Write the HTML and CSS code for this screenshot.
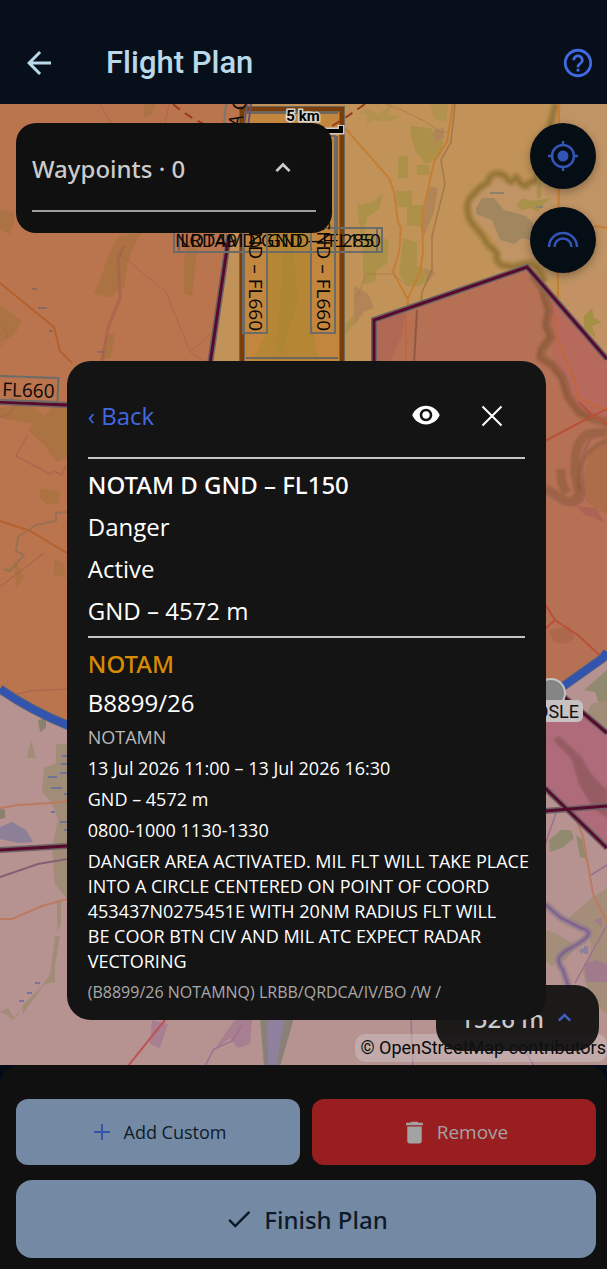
FILE: index.html
```html
<!DOCTYPE html>
<html lang="en">

<head>
    <meta charset="UTF-8" />
    <meta name="viewport" content="width=device-width, initial-scale=1.0" />
    <title>Flight Plan</title>
    <link rel="stylesheet" href="styles.css">
</head>

<body>
    <header class="topbar">
        <button class="icon-btn back-btn" aria-label="Go back">
            <svg width="36" height="36" viewBox="0 0 24 24" fill="currentColor">
                <path d="M20 11H7.830l5.590-5.590L12 4l-8 8 8 8 1.410-1.410L7.830 13H20v-2z" />
            </svg>
        </button>
        <h1>Flight Plan</h1>
        <button class="icon-btn help-btn" aria-label="Help">
            <svg width="34" height="34" viewBox="0 0 24 24" fill="currentColor">
                <path d="M11 18h2v-2h-2v2zm1-16C6.480 2 2 6.480 2 12s4.480 10 10 10 10-4.480 10-10S17.520 2 12 2zm0 18c-4.410 0-8-3.590-8-8s3.590-8 8-8 8 3.590 8 8-3.590 8-8 8zm0-14c-2.210 0-4 1.790-4 4h2c0-1.100.9-2 2-2s2 .9 2 2c0 2-3 1.750-3 5h2c0-2.250 3-2.500 3-5 0-2.210-1.790-4-4-4z" />
            </svg>
        </button>
    </header>

    <main class="map">
        <svg class="map-canvas" viewBox="0 104 607 962" preserveAspectRatio="xMidYMin slice" role="img" aria-label="Airspace map">
            <rect y="104" width="607" height="962" fill="#c19358" />
            <path d="M607 104H575L560 160 575 240 560 300 607 370Z" fill="#c29264" />

            <!-- woodland, right -->
            <g fill="#a59044">
                <path d="M366 108l12 6 14-10-3 10 12 2-12 6-14-2-8 4 0-10-8 0zM430 104h18l-2 18-12-4z" opacity=".5" />
                <path d="M410 126l20 2 14 14-6 16-12 6-10-12-4-12zM398 156h10v22h-10zM417 165h12v10h-12zM396 191h16v14h13l-2 22-16-2v-18h-10zM403 238l14 4v24l12 4v10l-10 6h-12l-8-12zM357 205l16-3 10-9-4 16-12 8-3 17 25 6-2 24-10 6-2 12-12 2v-30zM345 325l12-14v10l-6 6-6 8z" opacity=".75" />
                <path d="M584 316l8-8 2 10 8 4-10 4 4 12-12-10z" />
            </g>
            <g fill="#b28558">
                <path d="M430 186l8 2-4 24-10 24-4-10zM354 286l14 8 6 14-10 4-10 14zM434 130l10-2 0 10-10 6zM424 268l12 4-8 10z" />
            </g>

            <!-- lake -->
            <path d="M555 104c-8 24-10 42-15 64-4 14-12 10-17 12-10 8-10-4-18-4-12-6-14 8-20 12-12 4-18 10-16 22 2 14 14 14 20 24 12 8 4 20 16 26 16 8 26-4 34 10 6 12 30 20 68 0V104Z" fill="#c09464" />
            <g class="river" fill="none" stroke-linejoin="round">
                <path d="M556 104c-8 24-10 42-15 70-6 12-10 4-15 12-8-2-6-6-10-9-4 6-6 6-10 0-8-6-16-4-18 5-6 4-10 6-14 12-8 6-8 16-4 26 6 10 12 12 16 22 4 6 8 6 11 12-2 8 4 12 10 12 10 4 16-6 24-2 8 4 10 10 14 18" stroke="#9b7a39" stroke-width="9" opacity=".6" />
                <path d="M556 104c-8 24-10 42-15 70-6 12-10 4-15 12-8-2-6-6-10-9-4 6-6 6-10 0-8-6-16-4-18 5-6 4-10 6-14 12-8 6-8 16-4 26 6 10 12 12 16 22 4 6 8 6 11 12-2 8 4 12 10 12 10 4 16-6 24-2 8 4 10 10 14 18" stroke="#84652f" stroke-width="3" opacity=".6" />
            </g>
            <path d="M476 208l6-10 12 0 10 12 22 6 12 12v14l-16-4-8 6-14-4-8-20-16-6z" fill="#a18760" />
            <path d="M516 206l6-8 10 3 20-3-8 6-6 8-8-4-8 2zM536 160l5-4v42h-4z" fill="#a9914b" />
            <path d="M490 193h14M536 207h7" stroke="#8e8069" stroke-width="2" />

            <!-- roads, right -->
            <g fill="none">
                <path d="M345 128l44 50 5 14 4 30 3 6-2 24-6 20 14 26M453 104l-6 38-13 20-12 54 1 36-3 20-12 26-4 64M559 104v70l-1 100v45M594 226l13 2" stroke="#c47f35" stroke-width="2" />
                <path d="M455 104l-4 38-10 18 4 24-13 52v34l-10 22-6 76" stroke="#9c7045" stroke-width="1.500" opacity=".8" />
                <path d="M386 104l16 6 24 12 14 10 8 0M366 274h26l14 10M366 274l-10 26" stroke="#a6774a" opacity=".7" />
            </g>

            <!-- airspace, left -->
            <path d="M0 104H250L228 240 210 361 200 800H0Z" fill="#ba754e" />
            <g fill="#a6713e" opacity=".7">
                <path d="M0 210l14 2v12l-4 10-10-4zM112 246l8-10 22-4-10 18-5 16-3 22-8 4-4 6-18-4 8-20zM144 104l12 0-4 10-8 4zM186 240l12 4-6 52-8-2 0-30zM0 305l22 16-8 14-14 8zM106 336l10-4-6 26-10 2z" />
                <path d="M0 408l30-4 14 12-10 8-34-6zM28 430l24-22 15-8v58l-10 4-14-18zM40 488l20 4-2 12-12 0-6-6zM14 560l10 16-8 12zM54 558l10 6 2 14-12-4z" />
            </g>
            <g fill="none" stroke="#a9644d" opacity=".8">
                <path d="M124 246l-6 12 2 40-12 30-6 34" stroke-width="3" />
                <path d="M169 104l-6 30M120 254l46 38 24 60 20 12M0 326c8 4 10 16 0 20M100 104l12 20M190 352l28-24" />
                <path d="M28 434l-12 22 34 18 4-3 8 4 4-10M0 587l44-34M0 698l30-7 37-2M0 417c14-2 18-14 10-20" stroke-width="1.500" />
                <path d="M67 512l-11 1v8l-20 4-18 12-2 14 8 4-14 16-6-2" stroke="#927053" stroke-width="2" />
            </g>
            <path d="M0 283l54 44 6 24 12 12M0 521l30 10 37 22" fill="none" stroke="#b4602f" stroke-width="2" />
            <path d="M32 289h5M38 308h9M49 331h4M98 352h6" stroke="#80655e" stroke-width="1.500" />

            <!-- corridor -->
            <rect x="243" y="108" width="98" height="256" fill="#c2863e" />
            <path d="M268 230h42v80l8 50h-66l15-26z" fill="#b58735" />
            <path d="M284 250l8-12 6 60-16 58-6-8 4-50z" fill="#a5822f" opacity=".4" />
            <g fill="none">
                <path d="M242 361V109H342V361" stroke="#6f665d" stroke-width="6" />
                <path d="M242 361V109H342V361" stroke="#7a3e08" stroke-width="4" />
                <path d="M246 113H338M246 358H338M337 136V235" stroke="#6f665d" stroke-width="2" />
                <path d="M251 104l-4 30M247 104l-4 30" stroke="#6b5269" stroke-width="2" />
                <path d="M226 104l-4 40" stroke="#7c7871" stroke-width="2" />
                <path d="M173 104q20 18 60 32M365 104q-22 16-40 26" stroke="#9c3c1b" stroke-width="2" stroke-dasharray="9 6" />
                <path d="M229 235L210 364" stroke="#6d6265" stroke-width="6" />
                <path d="M229 235L210 364" stroke="#580a2c" stroke-width="3" />
            </g>

            <!-- airspace, right -->
            <path d="M374 320L527 267 607 359V653Q560 700 500 740H374Z" fill="#b67155" />
            <path d="M376 322l30-10-4 24-6 12-6 16h-14z" fill="#a95f56" opacity=".5" />
            <path d="M552 298l55 62v60l-26-4-16-22-12-30z" fill="#b76a5c" />
            <path d="M607 440l-16 10-12 40 10 14 18 10z" fill="#a76a45" opacity=".6" />
            <g class="river" fill="none" stroke="#8b5a38" stroke-linejoin="round">
                <path d="M533 275l10 14 6 22-3 14 5 12-9 12-2 8 12 8 10 12 6 20 12 16 14 6 16 4M607 432l-20 2c-12 8-12 24-12 40l4 18c-2 12-12 10-16 8l-18-12M561 469c0 10 0 16 6 24" stroke-width="9" opacity=".6" />
                <path d="M541 291l7 20-3 14 5 12-9 12-2 8 12 8 10 12 6 20 12 16 14 6" stroke="#84512f" stroke-width="2" opacity=".6" />
                <path d="M607 440c-24 10-30 26-28 50" stroke-width="4" opacity=".6" />
            </g>
            <path d="M545 489l16 12c16 8 26 2 22-16-4-24 0-40 16-56" fill="none" stroke="#a16054" stroke-width="3" opacity=".8" />
            <path d="M576 506l20 2 8 14-20-8z" fill="#ad6454" />
            <path d="M549 630l20-4 6 12-10 6-12-2z" fill="#ab6748" opacity=".8" />
            <path d="M406 314v50M555 314l3 28 16 36 4 20 22 10 7 1" fill="none" stroke="#c0673c" stroke-width="2" />
            <path d="M545 441l34-18 28-14M579 402l12 12 16 10M545 629l10-9 24 16 28 26M545 604l10 16" fill="none" stroke="#b9503a" stroke-width="2" />
            <path d="M417 310l-3 54" stroke="#925742" stroke-width="2" />
            <path d="M541 297h4M545 312h5M543 321h4M541 328h4M542 349h4" stroke="#806a66" />
            <path d="M374 364V320L527 267 607 359" fill="none" stroke="#6d6265" stroke-width="6" />
            <path d="M374 364V320L527 267 607 359" fill="none" stroke="#580a2c" stroke-width="3" />

            <!-- outside the control zone -->
            <path d="M0 689Q30 710 67 725Q310 820 551 695L607 653V1066H0Z" fill="#b69290" />
            <g fill="#a18d77">
                <path d="M31 740l5 18h-9zM56 744h11v155l-12-15-3-36 6-28-4-12-6-10-6-6 2-24 12-5zM57 900h4v24l-4 8zM55 936h5l-5 30v16l-10 2-8 10-14 20-1-8 20-20 8-12zM0 1012l8-4 6 10 8-10-6 10-4 2-6-6z" />
                <path d="M607 888l-18 12-20 18 20 12 2 20-8 22 6 26 18 16v-120zM545 930l12 4 20 12-12 14-14 6-6-6z" opacity=".85" />
            </g>
            <path d="M260 1018h34l-14 48h-16z" fill="#898077" />
            <path d="M267 1018h18l-9 48h-8z" fill="#8f809e" />
            <path d="M152 1020l16 4-8 24-10-4zM236 1018h16l-2 26-12 4-8-10-16 12z" fill="#a77f91" />
            <path d="M0 827l12-5 14 8 7 12-14 1-19-4z" fill="#8d7f98" />
            <path d="M38 720l8-2v10l-6 4zM0 808l5 2v8l-5 1z" fill="#8a806e" />
            <path d="M549 840l12-10h10l3 8-12 10-12 4zM576 835l6 4 4 20-6-2zM584 690l23-20v34l-8 0-4-12z" fill="#918a70" />
            <path d="M607 700v28l-20-14 4-10z" fill="#a18d77" />
            <path d="M584 964l12-4 11 4v18l-20 0zM594 920l8-2v10z" fill="#a17b8b" />
            <path d="M580 952l8-4M586 946v8" stroke="#8b829c" stroke-width="4" />
            <path d="M62 756h5M61 764h6M48 777h9M60 773h7M51 788h11M51 812h4M60 822h7M35 983h5M27 993h5M19 1001h5M64 794h3M64 830h3" stroke="#606ba0" stroke-width="1.500" />
            <g fill="none">
                <path d="M0 808l18-3 32-2 17-2M0 919h12l30-13 25-7M577 822l6 14 10 58 14 28" stroke="#bc7a61" stroke-width="2" />
                <path d="M0 877l38-13 29-5" stroke="#866071" stroke-width="2" />
                <path class="river" d="M545 904l16 14 20 10c16 4 4 12-10 20-16 8-14 14-8 22l6 18" stroke="#88798a" stroke-width="6" />
                <path d="M545 904l16 14 20 10c16 4 4 12-10 20-16 8-14 14-8 22l6 18" stroke="#855f91" stroke-width="2" />
                <path d="M556 813l-11 32M607 865l-16 10M607 925l-32 58M411 1020l2 46M242 1025l-10 16-18 8-9 17M520 1042l14 24" stroke="#9e7090" stroke-width="1.500" />
                <path d="M165 1020l-37 46" stroke="#bd5357" stroke-width="2" />
            </g>

            <!-- magenta zone -->
            <path d="M545 705L566 698 607 733V806L570 809 545 788Z" fill="#b06b7b" />
            <path d="M570 809L607 806V848Z" fill="#b06b7b" />
            <path class="river" d="M553 740l6-4 22 20 10 18 16 16v28l-14-10-14-24-8-26z" fill="#955c63" />
            <g fill="none" stroke="#6d6265" stroke-width="6">
                <path d="M0 850L67 846M545 811L607 806M545 788L607 848M563 696L607 733M0 402L67 405" />
            </g>
            <g fill="none" stroke="#580a2c" stroke-width="3">
                <path d="M0 850L67 846M545 811L607 806M545 788L607 848M563 696L607 733M0 402L67 405" />
            </g>
            <path d="M0 689Q30 710 67 725Q310 820 551 695L603 658L607 652" fill="none" stroke="#4f6183" stroke-width="9" />
            <path d="M0 689Q30 710 67 725Q310 820 551 695L603 658L607 652" fill="none" stroke="#3254ae" stroke-width="7" />

            <!-- labels -->
            <g class="map-label">
                <rect x="174" y="228" width="208" height="24" />
                <rect x="179" y="228" width="198" height="24" />
                <text x="175" y="247">NOTAM D GND – FL150</text>
                <text x="180" y="247">LRD49 D GND – FL285</text>
                <rect x="243" y="136" width="24" height="197" />
                <rect x="311" y="136" width="24" height="197" />
                <text transform="translate(249 331) rotate(90)" text-anchor="end">GND – FL660</text>
                <text transform="translate(317 331) rotate(90)" text-anchor="end">GND – FL660</text>
                <rect x="-60" y="378" width="118" height="24" transform="rotate(2 58 390)" />
                <text x="2" y="396" transform="rotate(2 0 396)">FL660</text>
                <text transform="translate(241 128) rotate(-78)">A C</text>
            </g>
            <path d="M260 131H341V125" fill="none" stroke="#d0ccc6" stroke-width="7" />
            <path d="M260 131H341V126" fill="none" stroke="#000" stroke-width="4" />
            <text class="scale-label" x="303" y="121" text-anchor="middle">5 km</text>
            <circle cx="551" cy="693" r="14" fill="#858585" stroke="#c4c4c4" stroke-width="2" />
            <rect x="526" y="700" width="57" height="22" rx="6" fill="#c8c1c1" />
            <text class="airport-label" x="579" y="718" text-anchor="end">MOSLE</text>
        </svg>

        <section class="waypoints">
            <div class="waypoints-head">
                <h2>Waypoints · 0</h2>
                <button class="icon-btn" aria-label="Collapse waypoints">
                    <svg width="26" height="26" viewBox="0 0 24 24" fill="currentColor">
                        <path d="M12 7l-7 7 1.800 1.800L12 10.600l5.200 5.200L19 14z" />
                    </svg>
                </button>
            </div>
            <hr>
        </section>

        <div class="map-tools">
            <button class="round-btn" aria-label="Centre on my position">
                <svg width="32" height="32" viewBox="0 0 32 32" fill="none" stroke="currentColor" stroke-width="2.500">
                    <circle cx="16" cy="16" r="11" />
                    <circle cx="16" cy="16" r="5.500" fill="currentColor" stroke="none" />
                    <path d="M16 1v4M16 27v4M1 16h4M27 16h4" />
                </svg>
            </button>
            <button class="round-btn" aria-label="Range rings">
                <svg width="32" height="32" viewBox="0 0 32 32" fill="none" stroke="currentColor" stroke-width="2.500">
                    <path d="M2 23a14 14 0 0 1 28 0M7.500 23a8.500 8.500 0 0 1 17 0" />
                </svg>
            </button>
        </div>

        <div class="attribution">© OpenStreetMap contributors</div>

        <button class="altitude">
            <span>1526 m</span>
            <svg width="21" height="21" viewBox="0 0 24 24" fill="currentColor">
                <path d="M12 6l-7.500 7.500 2 2L12 10l5.500 5.500 2-2z" />
            </svg>
        </button>

        <section class="panel">
            <div class="panel-head">
                <button class="back-link">‹ Back</button>
                <button class="icon-btn" aria-label="Show on map">
                    <svg width="30" height="30" viewBox="0 0 24 24" fill="currentColor">
                        <path d="M12 4.500C7 4.500 2.730 7.610 1 12c1.730 4.390 6 7.500 11 7.500s9.270-3.110 11-7.500c-1.730-4.390-6-7.500-11-7.500zM12 17c-2.760 0-5-2.240-5-5s2.240-5 5-5 5 2.240 5 5-2.240 5-5 5zm0-8c-1.660 0-3 1.340-3 3s1.340 3 3 3 3-1.340 3-3-1.340-3-3-3z" />
                    </svg>
                </button>
                <button class="icon-btn" aria-label="Close">
                    <svg width="24" height="24" viewBox="0 0 24 24" stroke="currentColor" stroke-width="2">
                        <path d="M2.500 3.500l19 19M21.500 3.500l-19 19" />
                    </svg>
                </button>
            </div>
            <hr>
            <h2>NOTAM D GND – FL150</h2>
            <p>Danger</p>
            <p>Active</p>
            <p>GND – 4572 m</p>
            <hr>
            <div class="notam">
                <h3>NOTAM</h3>
                <p class="notam-id">B8899/26</p>
                <p class="muted">NOTAMN</p>
                <p>13 Jul 2026 11:00 – 13 Jul 2026 16:30</p>
                <p>GND – 4572 m</p>
                <p>0800-1000 1130-1330</p>
                <p class="notam-text">DANGER AREA ACTIVATED. MIL FLT WILL TAKE PLACE INTO A CIRCLE CENTERED ON POINT OF COORD 453437N0275451E WITH 20NM RADIUS FLT WILL<br>BE COOR BTN CIV AND MIL ATC EXPECT RADAR VECTORING</p>
                <p class="raw">(B8899/26 NOTAMNQ) LRBB/QRDCA/IV/BO /W /</p>
            </div>
        </section>
    </main>

    <footer class="actions">
        <div class="action-sheet">
            <button class="btn">
                <svg width="24" height="24" viewBox="0 0 24 24" fill="none" stroke="#3254ae" stroke-width="2">
                    <path d="M12 4v16M4 12h16" />
                </svg>
                Add Custom
            </button>
            <button class="btn btn-remove">
                <svg width="29" height="29" viewBox="0 0 24 24" fill="currentColor">
                    <path d="M6 19c0 1.100.9 2 2 2h8c1.100 0 2-.9 2-2V7H6v12zM19 4h-3.500l-1-1h-5l-1 1H5v2h14V4z" />
                </svg>
                Remove
            </button>
            <button class="btn btn-finish">
                <svg width="30" height="30" viewBox="0 0 24 24" fill="currentColor">
                    <path d="M9 16.170L4.830 12l-1.420 1.410L9 19 21 7l-1.410-1.410z" />
                </svg>
                Finish Plan
            </button>
        </div>
    </footer>
</body>

</html>
```
FILE: styles.css
```css
* {
    box-sizing: border-box;
}

body {
    margin: 0;
    min-height: 100vh;
    display: flex;
    flex-direction: column;
    font-family: "Open Sans", "Noto Sans", sans-serif;
    background: #020b17;
    color: #fff;
}

h1,
h2,
h3,
p {
    margin: 0;
}

h2,
h3 {
    font-family: "Noto Sans", sans-serif;
    font-size: 24px;
    font-weight: 500;
    line-height: 33px;
}

hr {
    width: 100%;
    height: 2px;
    margin: 0;
    border: none;
    background: #c6c4c5;
}

button {
    padding: 0;
    border: none;
    background: none;
    color: inherit;
    font-family: inherit;
    cursor: pointer;
}

.icon-btn {
    width: 66px;
    height: 66px;
    display: flex;
    align-items: center;
    justify-content: center;
    flex-shrink: 0;
}

/* top bar */
.topbar {
    display: flex;
    align-items: center;
    padding: 22px 0 0 6px;
    height: 104px;
    background: #07101a;
    color: #b9d9eb;
}

.topbar h1 {
    flex: 1;
    margin-left: 34px;
    font-family: Roboto, sans-serif;
    font-size: 31px;
    font-weight: 500;
    line-height: 40px;
}

.help-btn {
    width: 58px;
    color: #4169e1;
}

/* map */
.map {
    position: relative;
    flex: 1;
    min-height: 940px;
    overflow: hidden;
}

.map-canvas {
    position: absolute;
    width: 100%;
    height: 100%;
}

.river {
    filter: blur(1px);
}

.map-label text {
    font-family: "Open Sans", "Noto Sans", sans-serif;
    font-size: 19px;
    fill: #0a0805;
}

.map-label rect {
    fill: none;
    stroke: #6d6b68;
    stroke-width: 2;
}

.scale-label {
    font-family: Roboto, sans-serif;
    font-size: 15px;
    font-weight: 700;
    fill: #000;
    stroke: #d8d4cd;
    stroke-width: 3;
    paint-order: stroke;
}

.airport-label {
    font-family: Roboto, sans-serif;
    font-size: 18px;
    fill: #111;
}

.waypoints {
    position: absolute;
    top: 19px;
    left: 16px;
    width: 52%;
    padding: 12px 16px 21px;
    border-radius: 20px;
    background: #101010;
    color: #cbcbcb;
}

.waypoints-head {
    display: flex;
    align-items: center;
    justify-content: space-between;
    margin-bottom: 9px;
}

.waypoints hr {
    background: #9d9d9d;
}

.map-tools {
    position: absolute;
    top: 19px;
    right: 11px;
    display: flex;
    flex-direction: column;
    gap: 18px;
}

.round-btn {
    width: 66px;
    height: 66px;
    display: flex;
    align-items: center;
    justify-content: center;
    border-radius: 50%;
    background: #050d15;
    color: #3355b5;
    box-shadow: 0 3px 8px rgba(0, 0, 0, 0.3);
}

.attribution {
    position: absolute;
    right: 0;
    bottom: 3px;
    padding: 0 1px 0 5px;
    border-radius: 10px;
    background: rgba(210, 210, 210, 0.4);
    color: #0b0a0a;
    font-family: Roboto, sans-serif;
    font-size: 18px;
    line-height: 28px;
}

.altitude {
    position: absolute;
    right: 8px;
    bottom: 14px;
    height: 66px;
    padding: 0 24px;
    display: flex;
    align-items: center;
    gap: 10px;
    border-radius: 24px;
    background: rgba(16, 16, 16, 0.93);
    color: #cbcbcb;
    font-family: "Noto Sans", sans-serif;
    font-size: 24px;
    font-weight: 500;
}

.altitude svg {
    color: #3f5fc4;
}

/* notam panel */
.panel {
    position: absolute;
    top: 257px;
    left: 11%;
    right: 10%;
    display: flex;
    flex-direction: column;
    gap: 9px;
    padding: 21px 21px 15px;
    border-radius: 24px;
    background: #141414;
    font-size: 24px;
    line-height: 33px;
}

.panel-head {
    display: flex;
    align-items: center;
}

.back-link {
    margin-right: auto;
    color: #4169e1;
    font-size: 24px;
}

.notam {
    display: flex;
    flex-direction: column;
    gap: 6px;
    font-size: 18px;
    line-height: 25px;
}

.notam h3 {
    color: #d98a00;
}

.notam-id {
    font-size: 24px;
    line-height: 33px;
}

.notam-text {
    margin-right: -8px;
}

.muted {
    color: #b9b9b9;
}

.raw {
    color: #a9a9a9;
    font-size: 16px;
}

/* bottom actions */
.action-sheet {
    display: grid;
    grid-template-columns: 1fr 1fr;
    gap: 15px 12px;
    padding: 34px 11px 11px 16px;
    border-radius: 20px 20px 0 0;
    background: #101010;
}

.btn {
    height: 66px;
    display: flex;
    align-items: center;
    justify-content: center;
    gap: 10px;
    border-radius: 12px;
    background: #748aa4;
    color: #0d1b29;
    font-size: 18px;
}

.btn-remove {
    gap: 8px;
    background: #991e20;
    color: #a3a3a3;
    font-size: 19px;
}

.btn-finish {
    grid-column: 1 / -1;
    height: 78px;
    border-radius: 16px;
    font-family: "Noto Sans", sans-serif;
    font-size: 24px;
    font-weight: 500;
}
```
